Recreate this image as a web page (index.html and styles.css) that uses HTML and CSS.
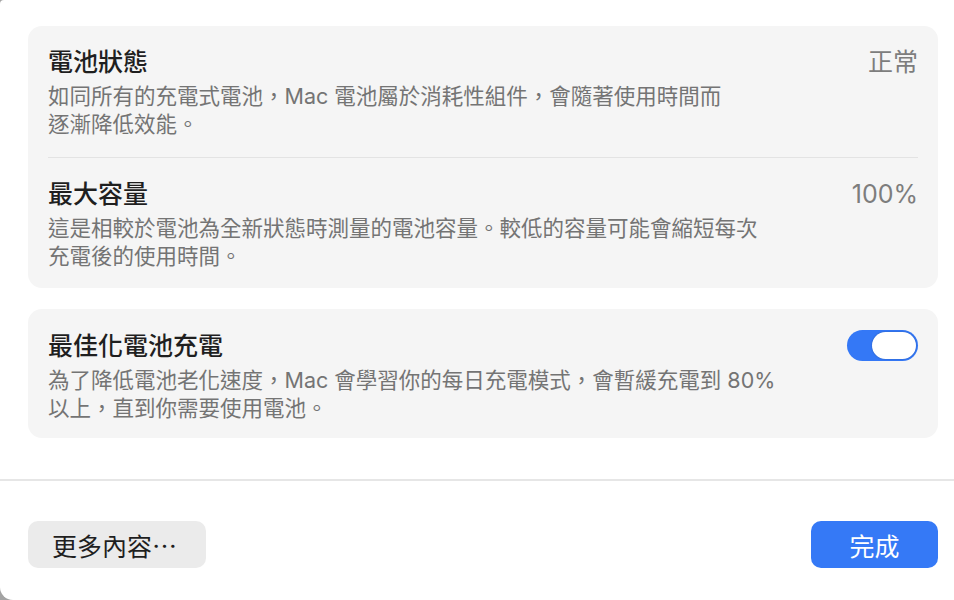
FILE: index.html
```html
<!DOCTYPE html>
<html lang="zh-Hant">
<head>
  <meta charset="UTF-8" />
  <meta name="viewport" content="width=device-width, initial-scale=1.0"/>
  <title>電池健康度</title>
  <link rel="stylesheet" href="styles.css">
</head>
<body>
  <div class="window">
    <div class="content">
      <div class="card">
        <div class="row">
          <div class="text">
            <h3 class="title">電池狀態</h3>
            <p class="desc">如同所有的充電式電池，Mac 電池屬於消耗性組件，會隨著使用時間而<br>逐漸降低效能。</p>
          </div>
          <span class="value">正常</span>
        </div>
        <div class="row">
          <div class="text">
            <h3 class="title">最大容量</h3>
            <p class="desc">這是相較於電池為全新狀態時測量的電池容量。較低的容量可能會縮短每次<br>充電後的使用時間。</p>
          </div>
          <span class="value">100%</span>
        </div>
      </div>

      <div class="card">
        <div class="row">
          <div class="text">
            <h3 class="title">最佳化電池充電</h3>
            <p class="desc">為了降低電池老化速度，Mac 會學習你的每日充電模式，會暫緩充電到 80%<br>以上，直到你需要使用電池。</p>
          </div>
          <label class="toggle">
            <input type="checkbox" checked>
            <span class="knob"></span>
          </label>
        </div>
      </div>
    </div>

    <div class="footer">
      <button class="btn">更多內容⋯</button>
      <button class="btn primary">完成</button>
    </div>
  </div>
</body>
</html>
```

FILE: styles.css
```css
html, body {
  margin: 0;
  height: 100%;
  background: #a3a3a3;
}
body {
  font-family: "Inter", "Noto Sans CJK TC", sans-serif;
  color: #1d1d1f;
}
.window {
  height: 600px;
  background: #fff;
  border-radius: 4px 0 0 13px;
  display: flex;
  flex-direction: column;
}
.content {
  padding: 26px 16px 0 28px;
  display: flex;
  flex-direction: column;
  gap: 21px;
  height: 481px;
  box-sizing: border-box;
  border-bottom: 2px solid #e6e6e6;
}
.card {
  background: #f5f5f5;
  border-radius: 14px;
  padding: 0 20px;
}
.row {
  display: flex;
  justify-content: space-between;
  align-items: flex-start;
  padding: 22px 0 19px;
}
.row + .row {
  border-top: 1px solid #e3e3e3;
  padding-bottom: 18px;
}
.card:last-child .row {
  padding: 23px 0 16px;
}
.title {
  margin: 0 0 6px;
  font-size: 25px;
  line-height: 28px;
  font-weight: 500;
  color: #1f1f1f;
}
.desc {
  margin: 0;
  font-size: 21.5px;
  line-height: 28px;
  color: #747474;
  white-space: nowrap;
}
.value {
  font-size: 25px;
  line-height: 28px;
  color: #7d7d7d;
}
.toggle {
  position: relative;
  width: 71px;
  height: 31px;
  margin-top: -2px;
  border-radius: 16px;
  background: #3478f6;
  flex-shrink: 0;
}
.toggle input {
  display: none;
}
.knob {
  position: absolute;
  top: 2px;
  right: 2px;
  width: 44px;
  height: 27px;
  border-radius: 14px;
  background: #fff;
  box-shadow: 0 0 2px rgba(0,0,0,0.25);
}
.footer {
  display: flex;
  justify-content: space-between;
  align-items: flex-start;
  padding: 40px 16px 0 28px;
}
.btn {
  height: 47px;
  border: none;
  border-radius: 10px;
  background: #ebebeb;
  color: #1f1f1f;
  font-family: "Inter", "Noto Sans CJK TC", sans-serif;
  font-size: 25px;
  width: 178px;
  text-align: left;
  padding: 0 0 0 24px;
}
.btn.primary {
  width: 127px;
  background: #3579f6;
  color: #fff;
  text-align: center;
  padding: 0;
}
```
